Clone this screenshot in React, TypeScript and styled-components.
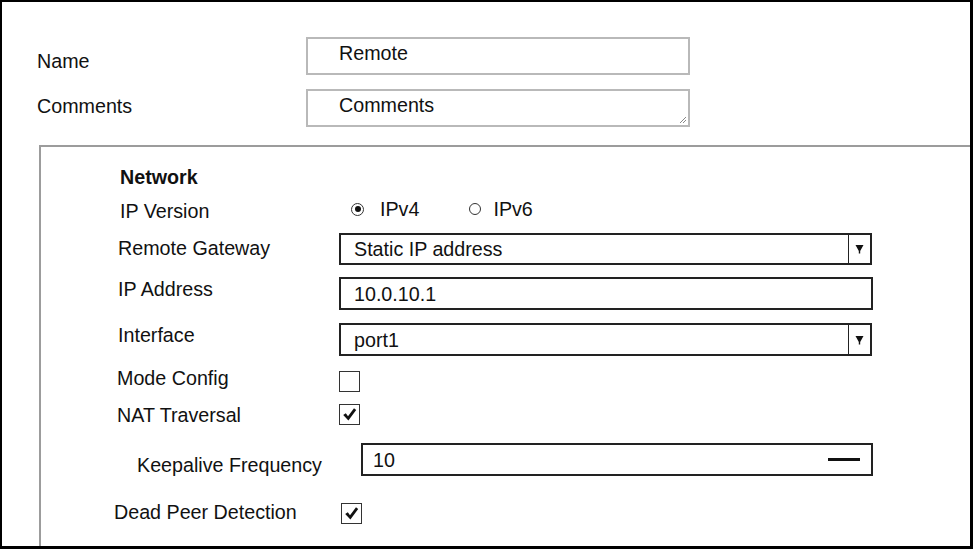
import React from "react";
import styled, { createGlobalStyle } from "styled-components";

const GlobalStyle = createGlobalStyle`
  html, body { margin: 0; padding: 0; background: #fff; }
  body { font-family: "Liberation Sans", Arial, sans-serif; }
`;

const Frame = styled.div`
  width: 973px;
  height: 549px;
  box-sizing: border-box;
  border-style: solid;
  border-color: #000;
  border-width: 2px 3px 3px 2px;
  display: flex;
  flex-direction: column;
  overflow: hidden;
  background: #fff;
  font-family: "Liberation Sans", Arial, sans-serif;
  font-size: 19.7px;
  line-height: 22px;
  color: #111;
`;

const TopForm = styled.div`
  padding: 35px 0 0 35px;
  display: flex;
  flex-direction: column;
  gap: 14px;
`;

const TopRow = styled.div`
  display: grid;
  grid-template-columns: 269px 384px;
  align-items: start;
`;

const TopLabel = styled.div<{ $nudge: number }>`
  margin-top: ${(p) => 8 + p.$nudge}px;
`;

const TextField = styled.div`
  position: relative;
  height: 38px;
  box-sizing: border-box;
  border: 2px solid #b9b9b9;
  padding: 3px 0 0 31px;
`;

const ResizeGrip = styled.svg`
  position: absolute;
  right: 1px;
  bottom: 1px;
  width: 9px;
  height: 9px;
`;

const Panel = styled.section`
  margin: 18px 0 0 37px;
  flex: 1;
  border-top: 2px solid #9c9c9c;
  border-left: 2px solid #9c9c9c;
  padding-top: 19px;
  display: flex;
  flex-direction: column;
`;

const Heading = styled.div`
  font-weight: bold;
  padding-left: 79px;
`;

const FieldRow = styled.div<{ $gap: number; $height: number }>`
  display: grid;
  grid-template-columns: 298px 1fr;
  align-items: start;
  height: ${(p) => p.$height}px;
  margin-top: ${(p) => p.$gap}px;
`;

const FieldLabel = styled.div<{ $indent: number; $top: number }>`
  padding-left: ${(p) => p.$indent}px;
  margin-top: ${(p) => p.$top}px;
  white-space: nowrap;
`;

const Control = styled.div<{ $shift: number }>`
  margin-left: ${(p) => p.$shift}px;
  display: flex;
  align-items: center;
  height: 100%;
`;

const RadioGroup = styled.div`
  display: flex;
  align-items: center;
`;

const RadioOption = styled.label<{ $gap: number; $after: number }>`
  display: flex;
  align-items: center;
  gap: ${(p) => p.$gap}px;
  margin-right: ${(p) => p.$after}px;
`;

const RadioDot = styled.span<{ $checked?: boolean; $size: number }>`
  width: ${(p) => p.$size}px;
  height: ${(p) => p.$size}px;
  box-sizing: border-box;
  border: 1.5px solid #333;
  border-radius: 50%;
  display: flex;
  align-items: center;
  justify-content: center;
  &::after {
    content: "";
    display: ${(p) => (p.$checked ? "block" : "none")};
    width: 6px;
    height: 6px;
    border-radius: 50%;
    background: #111;
  }
`;

const SelectBox = styled.div<{ $width: number; $height: number }>`
  width: ${(p) => p.$width}px;
  height: ${(p) => p.$height}px;
  box-sizing: border-box;
  border: 2px solid #222;
  display: flex;
  align-items: stretch;
`;

const SelectValue = styled.div`
  flex: 1;
  display: flex;
  align-items: center;
  padding-left: 13px;
`;

const SelectButton = styled.div`
  width: 21px;
  border-left: 1.5px solid #222;
  display: flex;
  align-items: center;
  justify-content: center;
`;

const InputBox = styled.div<{ $width: number; $height: number; $pad: number }>`
  width: ${(p) => p.$width}px;
  height: ${(p) => p.$height}px;
  box-sizing: border-box;
  border: 2px solid #222;
  display: flex;
  align-items: center;
  justify-content: space-between;
  padding: 0 11px 0 ${(p) => p.$pad}px;
`;

const Dash = styled.span`
  width: 32px;
  height: 3px;
  background: #111;
`;

const CheckBox = styled.span`
  width: 21px;
  height: 21px;
  box-sizing: border-box;
  border: 1.5px solid #333;
  display: flex;
  align-items: center;
  justify-content: center;
`;

const Arrow = () => (
  <svg width="9" height="10" viewBox="0 0 9 10">
    <path d="M0.5 1 H8.5 L5.2 7 V9.5 H3.8 V7 Z" fill="#111" />
  </svg>
);

const Check = () => (
  <svg width="15" height="15" viewBox="0 0 15 15">
    <path d="M1.2 8 L3.8 6.2 L6 9.2 L12 1.3 L14.2 3 L6.4 13.6 Z" fill="#111" />
  </svg>
);

type FieldProps = {
  label: string;
  indent: number;
  gap: number;
  height: number;
  nudge: number;
  shift?: number;
  children: React.ReactNode;
};

const Field = ({ label, indent, gap, height, nudge, shift = 0, children }: FieldProps) => (
  <FieldRow $gap={gap} $height={height}>
    <FieldLabel $indent={indent} $top={(height - 22) / 2 + nudge}>
      {label}
    </FieldLabel>
    <Control $shift={shift}>{children}</Control>
  </FieldRow>
);

export default function App() {
  return (
    <>
      <GlobalStyle />
      <Frame>
        <TopForm>
          <TopRow>
            <TopLabel $nudge={4.5}>Name</TopLabel>
            <TextField>Remote</TextField>
          </TopRow>
          <TopRow>
            <TopLabel $nudge={-2.5}>Comments</TopLabel>
            <TextField>
              Comments
              <ResizeGrip viewBox="0 0 9 9">
                <path d="M8 2 L2 8 M8 5 L5 8" stroke="#888" strokeWidth="1" />
              </ResizeGrip>
            </TextField>
          </TopRow>
        </TopForm>
        <Panel>
          <Heading>Network</Heading>
          <Field label="IP Version" indent={79} gap={8} height={22} nudge={4} shift={12}>
            <RadioGroup>
              <RadioOption $gap={16} $after={50}>
                <RadioDot $checked $size={13} />
                IPv4
              </RadioOption>
              <RadioOption $gap={12} $after={0}>
                <RadioDot $size={12} />
                IPv6
              </RadioOption>
            </RadioGroup>
          </Field>
          <Field label="Remote Gateway" indent={77} gap={15} height={32} nudge={-1}>
            <SelectBox $width={533} $height={32}>
              <SelectValue>Static IP address</SelectValue>
              <SelectButton>
                <Arrow />
              </SelectButton>
            </SelectBox>
          </Field>
          <Field label="IP Address" indent={77} gap={12} height={33} nudge={-4.5}>
            <InputBox $width={534} $height={33} $pad={13}>
              10.0.10.1
            </InputBox>
          </Field>
          <Field label="Interface" indent={77} gap={13} height={33} nudge={-5}>
            <SelectBox $width={533} $height={33}>
              <SelectValue>port1</SelectValue>
              <SelectButton>
                <Arrow />
              </SelectButton>
            </SelectBox>
          </Field>
          <Field label="Mode Config" indent={76} gap={15} height={21} nudge={-4}>
            <CheckBox />
          </Field>
          <Field label="NAT Traversal" indent={76} gap={11} height={21} nudge={1.5}>
            <CheckBox>
              <Check />
            </CheckBox>
          </Field>
          <Field label="Keepalive Frequency" indent={96} gap={19} height={33} nudge={5} shift={22}>
            <InputBox $width={512} $height={33} $pad={10}>
              10
              <Dash />
            </InputBox>
          </Field>
          <Field label="Dead Peer Detection" indent={73} gap={27} height={21} nudge={-2} shift={2}>
            <CheckBox>
              <Check />
            </CheckBox>
          </Field>
        </Panel>
      </Frame>
    </>
  );
}
